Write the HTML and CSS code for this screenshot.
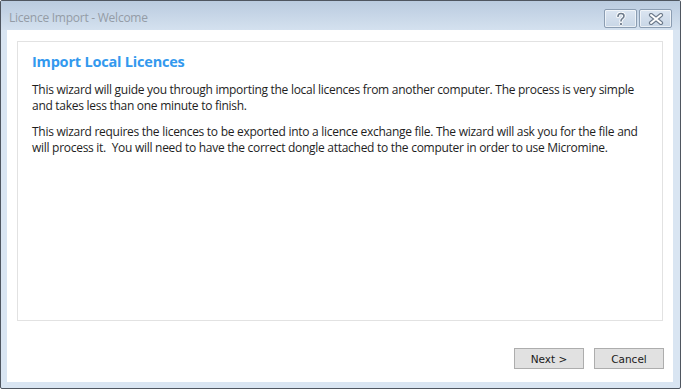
FILE: index.html
```html
<!DOCTYPE html>
<html>
<head>
<meta charset="utf-8">
<link rel="stylesheet" href="styles.css">
</head>
<body>
<div class="window">
  <div class="titlebar">
    <div class="title">Licence Import - Welcome</div>
    <div class="caps">
      <div class="cap">
        <svg width="12" height="14" viewBox="0 0 12 14"><path d="M3 4.5 Q3 1.5 6 1.5 Q9 1.5 9 4 Q9 5.6 7.3 6.6 Q6 7.4 6 9" fill="none" stroke="#fff" stroke-width="3.4" stroke-linecap="round"/><path d="M3 4.5 Q3 1.5 6 1.5 Q9 1.5 9 4 Q9 5.6 7.3 6.6 Q6 7.4 6 9" fill="none" stroke="#6d7b8c" stroke-width="1.6" stroke-linecap="round"/><circle cx="6" cy="12" r="1.6" fill="#6d7b8c" stroke="#fff" stroke-width="0.8"/></svg>
      </div>
      <div class="cap">
        <svg width="16" height="12" viewBox="0 0 16 12"><path d="M3 2 L13 10 M13 2 L3 10" stroke="#6d7b8c" stroke-width="4.2" stroke-linecap="round"/><path d="M3 2 L13 10 M13 2 L3 10" stroke="#fff" stroke-width="2" stroke-linecap="round"/></svg>
      </div>
    </div>
  </div>
  <div class="client">
    <div class="panel">
      <h1 class="heading">Import Local Licences</h1>
      <p class="para">This wizard will guide you through importing the local licences from another computer. The process is very simple and takes less than one minute to finish.</p>
      <p class="para">This wizard requires the licences to be exported into a licence exchange file. The wizard will ask you for the file and will process it.&nbsp; You will need to have the correct dongle attached to the computer in order to use Micromine.</p>
    </div>
    <div class="buttons">
      <button class="btn">Next &gt;</button>
      <button class="btn">Cancel</button>
    </div>
  </div>
</div>
</body>
</html>
```
FILE: styles.css
```css
html, body {
  margin: 0;
  padding: 0;
  background: #ffffff;
}
.window {
  box-sizing: border-box;
  width: 681px;
  height: 389px;
  border: 1px solid #4f5660;
  border-radius: 2px;
  background: #d9e5f2;
  display: flex;
  flex-direction: column;
  padding: 0 7px 6px 6px;
}
.titlebar {
  height: 29px;
  margin: 0 -7px 0 -6px;
  padding: 0 7px 0 6px;
  background: linear-gradient(#bacbdf, #d4e1ef);
  display: flex;
  align-items: flex-start;
  justify-content: space-between;
  flex-shrink: 0;
}
.title {
  font-family: "Open Sans", "Noto Sans", sans-serif;
  font-size: 12px;
  color: #949ca6;
  padding: 8px 0 0 2px;
  letter-spacing: -0.25px;
}
.caps {
  display: flex;
  gap: 2px;
  margin-top: 8px;
  margin-right: 1px;
}
.cap {
  box-sizing: border-box;
  width: 33px;
  height: 19px;
  border: 1px solid #8b9db2;
  border-radius: 2px;
  background: linear-gradient(#dbe5f1, #c8d6e6);
  box-shadow: inset 0 0 0 1px rgba(255,255,255,0.6);
  display: flex;
  align-items: center;
  justify-content: center;
}
.client {
  flex: 1;
  background: #ffffff;
  display: flex;
  flex-direction: column;
  padding: 11px 10px 0 10px;
}
.panel {
  box-sizing: border-box;
  height: 280px;
  border: 1px solid #e2e2e2;
  padding: 8px 14px 0 14px;
}
.heading {
  margin: 0 0 8px 0;
  font-family: "Open Sans", "Noto Sans", sans-serif;
  font-size: 14.5px;
  font-weight: 700;
  color: #3399ee;
  line-height: 24px;
  letter-spacing: -0.2px;
}
.para {
  margin: 0 0 10px 0;
  font-family: "Open Sans", "Noto Sans", sans-serif;
  font-size: 12px;
  line-height: 16px;
  color: #1e1e1e;
  letter-spacing: -0.28px;
}
.buttons {
  display: flex;
  justify-content: flex-end;
  gap: 10px;
  margin-top: 27px;
  margin-right: -1px;
}
.btn {
  box-sizing: border-box;
  width: 70px;
  height: 21px;
  border: 1px solid #adadad;
  background: #e1e1e1;
  font-family: "DejaVu Sans", "Liberation Sans", sans-serif;
  font-size: 10.5px;
  color: #1a1a1a;
  padding: 0;
  margin: 0;
}
```
